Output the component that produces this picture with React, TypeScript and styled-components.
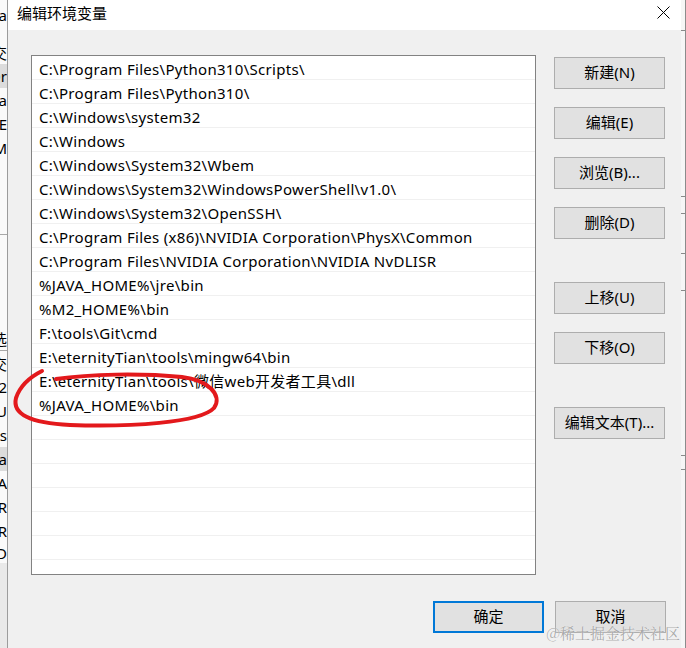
import React from "react";
import styled, { createGlobalStyle } from "styled-components";

const GlobalStyle = createGlobalStyle`
  html, body { margin: 0; padding: 0; background: #f0f0f0; overflow: hidden; }
  * { box-sizing: border-box; }
`;

const FONT = `"Noto Sans", "Noto Sans CJK SC", sans-serif`;

const Screen = styled.div`
  display: flex;
  width: 686px;
  height: 648px;
  position: relative;
  font-family: ${FONT};
  font-size: 15px;
  color: #000;
  overflow: hidden;
`;

const BackStrip = styled.div`
  width: 8px;
  flex: none;
  display: flex;
  flex-direction: column;
  background: #f4f4f4;
  overflow: hidden;
  border-right: 1px solid #9c9c9c;
`;

const BackRow = styled.div<{ $h: number; $shade?: boolean; $line?: boolean }>`
  height: ${(p) => p.$h}px;
  flex: none;
  display: flex;
  align-items: center;
  justify-content: flex-end;
  white-space: nowrap;
  font-size: 15px;
  background: ${(p) => (p.$shade ? "#dcdcdc" : "#fafafa")};
  border-bottom: ${(p) => (p.$line ? "1px solid #a8a8a8" : "none")};
`;

const BackFill = styled.div`
  flex: 1;
  background: #e9e9e9;
`;

const Dialog = styled.div`
  width: 673px;
  flex: none;
  display: flex;
  flex-direction: column;
  background: #f0f0f0;
`;

const TitleBar = styled.div`
  height: 30px;
  flex: none;
  background: #fff;
  display: flex;
  align-items: center;
  justify-content: space-between;
  padding: 0 11px 5px 9px;
  font-size: 15px;
`;

const Body = styled.div`
  flex: 1;
  display: flex;
  flex-direction: column;
  padding: 25px 15px 0 23px;
`;

const MainRow = styled.div`
  display: flex;
  gap: 18px;
`;

const List = styled.div`
  width: 505px;
  height: 520px;
  border: 1px solid #828282;
  background: #fff;
  overflow: hidden;
  display: flex;
  flex-direction: column;
`;

const Row = styled.div`
  height: 24px;
  flex: none;
  display: flex;
  align-items: center;
  padding-left: 7px;
  padding-top: 2px;
  border-bottom: 1px solid #f0f0f0;
  white-space: nowrap;
  letter-spacing: 0.3px;
`;

const ButtonCol = styled.div`
  display: flex;
  flex-direction: column;
  padding-top: 2px;
`;

const Button = styled.button<{ $gap?: number; $primary?: boolean }>`
  width: 111px;
  height: 32px;
  flex: none;
  margin-top: ${(p) => p.$gap ?? 0}px;
  background: #e1e1e1;
  border: ${(p) => (p.$primary ? "2px solid #0078d7" : "1px solid #adadad")};
  font-family: ${FONT};
  font-size: 15px;
  color: #000;
  padding: 0 0 4px;
  display: flex;
  align-items: center;
  justify-content: center;
`;

const Footer = styled.div`
  display: flex;
  justify-content: flex-end;
  gap: 11px;
  margin-top: 26px;
`;

const RightStrip = styled.div`
  flex: 1;
  background: #f6f6f6;
  display: flex;
  flex-direction: column;
  border-right: 1px solid #8c8c8c;
`;

const Tick = styled.div<{ $top: number }>`
  margin-top: ${(p) => p.$top}px;
  height: 1px;
  background: #8a8a8a;
  flex: none;
`;

const Overlay = styled.svg`
  position: absolute;
  left: 0;
  top: 0;
  pointer-events: none;
`;

const Watermark = styled.div`
  position: absolute;
  right: 6px;
  bottom: 5px;
  font-family: "Noto Serif CJK SC", "Noto Sans CJK SC", serif;
  font-size: 15px;
  color: rgba(140, 140, 140, 0.75);
  text-shadow: 0 0 1px #fff;
  white-space: nowrap;
`;

const paths = [
  "C:\\Program Files\\Python310\\Scripts\\",
  "C:\\Program Files\\Python310\\",
  "C:\\Windows\\system32",
  "C:\\Windows",
  "C:\\Windows\\System32\\Wbem",
  "C:\\Windows\\System32\\WindowsPowerShell\\v1.0\\",
  "C:\\Windows\\System32\\OpenSSH\\",
  "C:\\Program Files (x86)\\NVIDIA Corporation\\PhysX\\Common",
  "C:\\Program Files\\NVIDIA Corporation\\NVIDIA NvDLISR",
  "%JAVA_HOME%\\jre\\bin",
  "%M2_HOME%\\bin",
  "F:\\tools\\Git\\cmd",
  "E:\\eternityTian\\tools\\mingw64\\bin",
  "E:\\eternityTian\\tools\\微信web开发者工具\\dll",
  "%JAVA_HOME%\\bin",
];

const backRows: { h: number; t: string; shade?: boolean; line?: boolean }[] = [
  { h: 30, t: "ia" },
  { h: 10, t: "" },
  { h: 24, t: "交" },
  { h: 24, t: "Or", shade: true },
  { h: 24, t: "a" },
  { h: 24, t: "E" },
  { h: 24, t: "M" },
  { h: 75, t: "", line: true },
  { h: 92, t: "" },
  { h: 24, t: "选", line: true },
  { h: 24, t: "交" },
  { h: 24, t: "M2" },
  { h: 24, t: "IU" },
  { h: 24, t: "os" },
  { h: 24, t: "a", shade: true },
  { h: 24, t: "A" },
  { h: 24, t: "R" },
  { h: 24, t: "R" },
  { h: 20, t: "D" },
];

export default function App() {
  const rows = [...paths, ...Array(7).fill("")];
  return (
    <>
      <GlobalStyle />
      <Screen>
        <BackStrip>
          {backRows.map((r, i) => (
            <BackRow key={i} $h={r.h} $shade={r.shade} $line={r.line}>
              {r.t}
            </BackRow>
          ))}
          <BackFill />
        </BackStrip>
        <Dialog>
          <TitleBar>
            <span>编辑环境变量</span>
            <svg width="13" height="13" viewBox="0 0 13 13">
              <path d="M0.5 0.5 L12.5 12.5 M12.5 0.5 L0.5 12.5" stroke="#000" strokeWidth="1" fill="none" />
            </svg>
          </TitleBar>
          <Body>
            <MainRow>
              <List>
                {rows.map((p, i) => (
                  <Row key={i}>{p}</Row>
                ))}
              </List>
              <ButtonCol>
                <Button>新建(N)</Button>
                <Button $gap={18}>编辑(E)</Button>
                <Button $gap={18}>浏览(B)...</Button>
                <Button $gap={18}>删除(D)</Button>
                <Button $gap={43}>上移(U)</Button>
                <Button $gap={18}>下移(O)</Button>
                <Button $gap={43}>编辑文本(T)...</Button>
              </ButtonCol>
            </MainRow>
            <Footer>
              <Button $primary>确定</Button>
              <Button>取消</Button>
            </Footer>
          </Body>
        </Dialog>
        <RightStrip>
          <Tick $top={30} />
          <Tick $top={165} />
          <Tick $top={16} />
          <Tick $top={39} />
          <Tick $top={36} />
          <Tick $top={164} />
          <Tick $top={13} />
        </RightStrip>
        <Overlay width="686" height="648" viewBox="0 0 686 648">
          <path
            d="M42 371 C30 377, 20 386, 16 398 C12 414, 30 423, 70 425 C130 427, 200 423, 214 408 C223 395, 208 380, 182 377 C140 373, 90 374, 56 379"
            stroke="#e3191c"
            strokeWidth="4"
            fill="none"
            strokeLinecap="round"
          />
        </Overlay>
        <Watermark>@稀土掘金技术社区</Watermark>
      </Screen>
    </>
  );
}
